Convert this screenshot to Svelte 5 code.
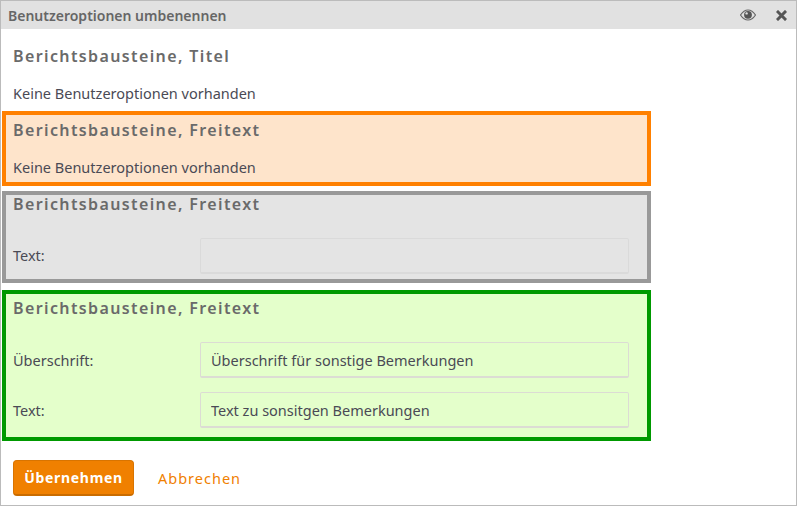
<script>
  let headline = "Überschrift für sonstige Bemerkungen";
  let bodyText = "Text zu sonsitgen Bemerkungen";
</script>

<div class="dialog">
  <header class="titlebar">
    <span class="title">Benutzeroptionen umbenennen</span>
    <div class="actions">
      <svg class="eye" viewBox="0 0 16 12" width="16" height="12" aria-hidden="true">
        <path d="M0.5 6C3 2.2 5.4 1 8 1s5 1.2 7.5 5C13 9.8 10.6 11 8 11S3 9.8 0.5 6z" fill="none" stroke="#666" stroke-width="1.2"/>
        <circle cx="8" cy="5.8" r="3.9" fill="#555"/>
        <circle cx="6.6" cy="4.4" r="1.2" fill="#e1e1e1"/>
      </svg>
      <svg class="close" viewBox="0 0 11 11" width="11" height="11" aria-hidden="true">
        <path d="M2 2l7 7M9 2l-7 7" stroke="#555" stroke-width="3" stroke-linecap="square" fill="none"/>
      </svg>
    </div>
  </header>

  <section class="block plain">
    <h3>Berichtsbausteine, Titel</h3>
    <p>Keine Benutzeroptionen vorhanden</p>
  </section>

  <section class="block orange">
    <h3>Berichtsbausteine, Freitext</h3>
    <p>Keine Benutzeroptionen vorhanden</p>
  </section>

  <section class="block gray">
    <h3>Berichtsbausteine, Freitext</h3>
    <div class="row">
      <label for="t1">Text:</label>
      <input id="t1" disabled />
    </div>
  </section>

  <section class="block green">
    <h3>Berichtsbausteine, Freitext</h3>
    <div class="row">
      <label for="h2">Überschrift:</label>
      <input id="h2" bind:value={headline} />
    </div>
    <div class="row">
      <label for="t2">Text:</label>
      <input id="t2" bind:value={bodyText} />
    </div>
  </section>

  <footer class="buttons">
    <button class="primary">Übernehmen</button>
    <a href="#cancel" class="cancel">Abbrechen</a>
  </footer>
</div>

<style>
  :global(body) {
    margin: 0;
    background: #fff;
  }

  .dialog {
    box-sizing: border-box;
    width: 797px;
    height: 506px;
    border: 1px solid #bbb;
    font-family: "Noto Sans", "Open Sans", sans-serif;
    font-size: 14.5px;
    color: #4a4a55;
    overflow: hidden;
  }

  .titlebar {
    display: flex;
    justify-content: space-between;
    align-items: center;
    height: 28px;
    padding: 0 9px 0 7px;
    background: #e1e1e1;
  }

  .title {
    font-size: 14px;
    font-weight: 600;
    color: #666;
  }

  .actions {
    display: flex;
    align-items: center;
    gap: 20px;
  }

  .block {
    box-sizing: border-box;
    width: 649px;
    margin-left: 1px;
    padding: 0 7px;
    border: 4px solid transparent;
  }

  h3 {
    margin: 0;
    font-size: 16px;
    line-height: 22px;
    font-weight: 600;
    letter-spacing: 1.38px;
    color: #6a6a6a;
  }

  p {
    margin: 0;
    line-height: 20px;
  }

  .plain {
    height: 82px;
    padding-top: 12px;
  }

  .plain p {
    margin-top: 16px;
  }

  .orange {
    height: 75px;
    padding-top: 4px;
    background: #fee4cb;
    border-color: #ff8000;
  }

  .orange p {
    margin-top: 16px;
  }

  .gray {
    height: 92px;
    margin-top: 5px;
    background: #e4e4e4;
    border-color: #999;
  }

  .green {
    height: 151px;
    margin-top: 7px;
    padding-top: 3px;
    background: #e4ffcb;
    border-color: #090;
  }

  .gray h3 {
    margin-top: -2px;
  }

  .row {
    display: flex;
    align-items: center;
    height: 36px;
    margin-top: 14px;
  }

  .gray .row {
    margin-top: 23px;
  }

  .gray label {
    margin-bottom: 2px;
  }

  .green .row:first-of-type {
    margin-top: 23px;
  }

  label {
    width: 187px;
    flex: none;
  }

  input {
    box-sizing: border-box;
    width: 429px;
    height: 36px;
    padding: 0 10px;
    border: 1px solid #dcdcd4;
    border-bottom-width: 2px;
    border-radius: 2px;
    background: transparent;
    font: inherit;
    color: inherit;
    outline: none;
  }

  .gray input {
    border-color: #dadada;
  }

  .buttons {
    display: flex;
    align-items: center;
    gap: 24px;
    margin-top: 19px;
    padding-left: 12px;
  }

  .primary {
    box-sizing: border-box;
    width: 121px;
    height: 36px;
    padding: 0;
    border: 1px solid #d97400;
    border-bottom: 2px solid #c96c00;
    border-radius: 4px;
    background: #f08000;
    color: #fff;
    font: 700 14px "Noto Sans", sans-serif;
    letter-spacing: 0.7px;
  }

  .cancel {
    color: #f08000;
    text-decoration: none;
    letter-spacing: 1px;
  }
</style>
